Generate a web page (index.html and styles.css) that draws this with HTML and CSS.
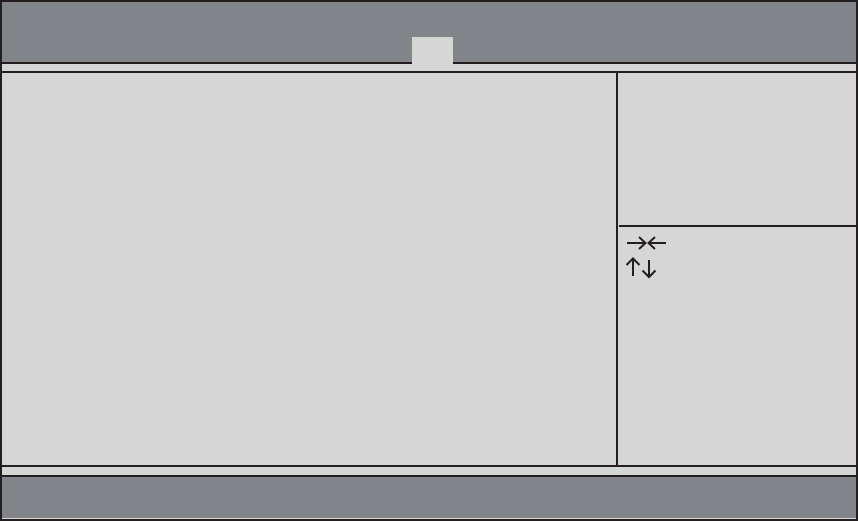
FILE: index.html
```html
<!DOCTYPE html>
<html lang="en">
<head>
  <meta charset="UTF-8" />
  <title>Setup</title>
  <link rel="stylesheet" href="styles.css">
</head>
<body>
  <div class="screen">
    <div class="top-bar">
      <div class="tab"></div>
    </div>
    <div class="strip"></div>

    <div class="main">
      <div class="content"></div>
      <div class="side">
        <div class="side-help"></div>
        <div class="side-rule"></div>
        <div class="side-keys">
          <svg class="keys" width="42" height="44" viewBox="0 0 42 44">
            <g fill="none" stroke="#231f20" stroke-width="2">
              <line x1="2" y1="8" x2="20" y2="8" />
              <polyline points="14,2 20.5,8 14,14" />
              <line x1="24.5" y1="8" x2="41" y2="8" />
              <polyline points="30,2 23.5,8 30,14" />
              <line x1="8" y1="24" x2="8" y2="41" />
              <polyline points="1.5,30 8,23.5 14.5,30" />
              <line x1="24" y1="25" x2="24" y2="42" />
              <polyline points="17.5,35.5 24,42 30.5,35.5" />
            </g>
          </svg>
        </div>
      </div>
    </div>

    <div class="strip bottom-strip"></div>
    <div class="bottom-bar"></div>
  </div>
</body>
</html>
```

FILE: styles.css
```css
body { margin: 0; background: #d6d6d6; }
.screen { width: 858px; height: 521px; box-sizing: border-box; border: 2px solid #231f20; display: flex; flex-direction: column; background: #d6d6d6; }

.top-bar { height: 60px; flex: none; background: #818489; border-bottom: 2px solid #231f20; display: flex; align-items: flex-end; padding-left: 410px; }
.tab { width: 41px; height: 27px; margin-bottom: -2px; background: #d6d6d6; }

.strip { height: 7px; flex: none; background: #d6d6d6; border-bottom: 2px solid #231f20; }
.bottom-strip { height: 8px; border-top: 2px solid #231f20; background: #d4d6d5; }

.main { flex: 1; display: flex; min-height: 0; }
.content { width: 614px; border-right: 2px solid #231f20; }
.side { flex: 1; display: flex; flex-direction: column; }
.side-help { height: 152px; }
.side-rule { height: 2px; margin-left: 1px; background: #231f20; }
.side-keys { padding: 8px 0 0 7px; }
.keys { display: block; }

.bottom-bar { height: 41px; flex: none; background: #818489; border-bottom: 1px solid #d6d6d6; }
```
